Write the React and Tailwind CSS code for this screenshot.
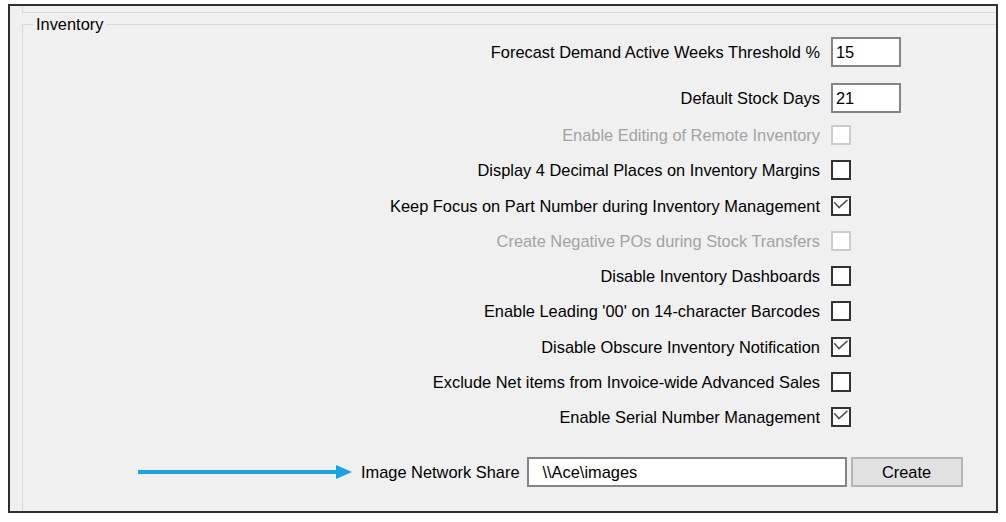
import React from 'react';

// Inventory settings rows, top to bottom
const rows = [
  { label: 'Forecast Demand Active Weeks Threshold %', type: 'text', value: '15' },
  { label: 'Default Stock Days', type: 'text', value: '21' },
  { label: 'Enable Editing of Remote Inventory', disabled: true },
  { label: 'Display 4 Decimal Places on Inventory Margins' },
  { label: 'Keep Focus on Part Number during Inventory Management', checked: true },
  { label: 'Create Negative POs during Stock Transfers', disabled: true },
  { label: 'Disable Inventory Dashboards' },
  { label: "Enable Leading '00' on 14-character Barcodes" },
  { label: 'Disable Obscure Inventory Notification', checked: true },
  { label: 'Exclude Net items from Invoice-wide Advanced Sales' },
  { label: 'Enable Serial Number Management', checked: true },
];

function CheckBox({ checked, disabled }) {
  return (
    <div
      className={`w-[20px] h-[20px] bg-white border-2 ${
        disabled ? 'border-[#cccccc]' : 'border-[#333333]'
      }`}
    >
      {checked && (
        <svg width="16" height="16" viewBox="0 0 16 16" className="block">
          <path d="M1.2 4.2 L6 9.6 L14.4 1.8" fill="none" stroke="#555555" strokeWidth="1.6" />
        </svg>
      )}
    </div>
  );
}

function TextBox({ value, className = '' }) {
  return (
    <div className={`h-[30px] bg-white border-2 border-[#858585] flex items-center text-black ${className}`}>
      {value}
    </div>
  );
}

function Row({ row }) {
  const isText = row.type === 'text';
  return (
    <div className={`flex items-center ${isText ? 'h-[30px]' : 'h-[35.3px]'}`}>
      <div className={`w-[808px] text-right pr-[11px] ${row.disabled ? 'text-[#a3a3a3]' : 'text-black'}`}>
        {row.label}
      </div>
      {isText ? (
        <TextBox value={row.value} className="w-[70px] pl-[3px]" />
      ) : (
        <CheckBox checked={row.checked} disabled={row.disabled} />
      )}
    </div>
  );
}

export default function App() {
  const textRows = rows.filter(r => r.type === 'text');
  const checkRows = rows.filter(r => r.type !== 'text');

  return (
    <div className="w-[1006px] h-[522px] bg-white overflow-hidden font-['Liberation_Sans',Arial,sans-serif] text-[16.4px] leading-[20px]">
      <div className="ml-[8px] mt-[4px] w-[990px] h-[509px] border-2 border-[#2f2f2f] bg-[#f0f0f0] overflow-hidden">
        {/* bottom edge of the group above */}
        <div className="ml-[12px] h-[7px] border-l border-b border-[#d9d9d9]" />

        <fieldset className="ml-[12px] mt-[1px] p-0 border-l border-t border-[#d9d9d9] h-[520px]">
          <legend className="ml-[10px] px-[3px] text-black">Inventory</legend>

          <div className="mt-[3px] flex flex-col gap-[16px]">
            {textRows.map((row, i) => (
              <Row key={i} row={row} />
            ))}
          </div>

          <div className="mt-[4.3px] flex flex-col">
            {checkRows.map((row, i) => (
              <Row key={i} row={row} />
            ))}
          </div>

          {/* image share row */}
          <div className="mt-[22px] flex items-center h-[30px] pl-[115px]">
            <svg width="214" height="16" viewBox="0 0 214 16" className="block">
              <line x1="0" y1="8" x2="200" y2="8" stroke="#16a4e6" strokeWidth="4" />
              <polygon points="198,1 214,8 198,15" fill="#16a4e6" />
            </svg>
            <span className="ml-[9px] text-black">Image Network Share</span>
            <TextBox value="\\Ace\images" className="ml-[7px] w-[320px] pl-[14px]" />
            <button className="ml-[4px] w-[112px] h-[30px] bg-[#e1e1e1] border-2 border-[#b4b4b4] text-black">
              Create
            </button>
          </div>
        </fieldset>
      </div>
    </div>
  );
}
